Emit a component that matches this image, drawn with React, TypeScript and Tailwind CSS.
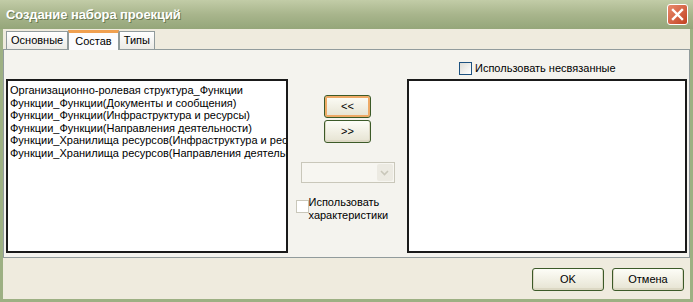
import React from 'react'

const items = [
  'Организационно-ролевая структура_Функции',
  'Функции_Функции(Документы и сообщения)',
  'Функции_Функции(Инфраструктура и ресурсы)',
  'Функции_Функции(Направления деятельности)',
  'Функции_Хранилища ресурсов(Инфраструктура и ресурсы)',
  'Функции_Хранилища ресурсов(Направления деятельности)',
]

function XpButton({ label, focused, className }: { label: string; focused?: boolean; className?: string }) {
  return (
    <button
      className={`flex items-center justify-center rounded-[3px] border border-[#3c5a28] bg-gradient-to-b from-[#fdfdf7] to-[#e6e3d2] text-[11px] text-black ${
        focused ? 'shadow-[inset_0_0_0_2px_#eeaa66]' : 'shadow-[inset_0_-1px_0_1px_#dcd8c4]'
      } ${className ?? ''}`}
    >
      {label}
    </button>
  )
}

function CheckBox() {
  return <span className="inline-block h-[13px] w-[13px] border border-[#1c5180] bg-gradient-to-br from-[#dcdcd7] to-white" />
}

export default function App() {
  return (
    <div
      className="relative h-[302px] w-[693px] overflow-hidden bg-[#efebde] text-black"
      style={{ fontFamily: '"Liberation Sans", Arial, sans-serif' }}
    >
      {/* title bar */}
      <div className="flex h-[29px] items-center justify-between bg-gradient-to-b from-[#c2cca7] via-[#a8b58c] to-[#95a67a] pl-[6px] pr-[5px]">
        <span className="text-[13px] font-bold tracking-[-0.1px] text-white [text-shadow:1px_1px_0_#6a7a50]">
          Создание набора проекций
        </span>
        <span className="flex h-[21px] w-[21px] items-center justify-center rounded-[3px] border border-white bg-gradient-to-br from-[#e88a6c] to-[#c2401f]">
          <svg width="13" height="13" viewBox="0 0 13 13">
            <path d="M2 2 L11 11 M11 2 L2 11" stroke="white" strokeWidth="2.4" strokeLinecap="square" />
          </svg>
        </span>
      </div>

      {/* body */}
      <div className="flex h-[273px] flex-col border-x-[3px] border-b-[3px] border-x-[#9db083] border-b-[#9db083]">
        {/* tabs */}
        <div className="flex h-[20px] items-end pl-[3px] pt-[1px]">
          <div className="flex h-[18px] items-center border border-b-0 border-[#919b9c] bg-gradient-to-b from-white to-[#ecebe6] px-[4px] text-[11px]">
            Основные
          </div>
          <div className="relative -mb-[1px] flex h-[20px] items-center border-x border-[#919b9c] border-t-[3px] border-t-[#f0a050] bg-[#fcfcfe] px-[6px] text-[11px]">
            Состав
          </div>
          <div className="flex h-[18px] items-center border border-b-0 border-[#919b9c] bg-gradient-to-b from-white to-[#ecebe6] px-[4px] text-[11px]">
            Типы
          </div>
        </div>

        {/* tab panel */}
        <div className="flex h-[209px] flex-col border border-[#919b9c] bg-[#f4f3ee] px-[2px] pt-[10px]">
          <div className="flex h-[16px] items-center pl-[453px] text-[11px]">
            <CheckBox />
            <span className="ml-[3px]">Использовать несвязанные</span>
          </div>
          <div className="mt-[3px] flex">
            <div className="h-[174px] w-[282px] overflow-hidden border-2 border-[#1a1a1a] bg-white pl-[2px] pt-[3px] text-[11px] leading-[12.5px]">
              {items.map((t) => (
                <div key={t} className="whitespace-nowrap">
                  {t}
                </div>
              ))}
            </div>
            <div className="flex w-[120px] flex-col items-center">
              <XpButton label="<<" focused className="mt-[16px] h-[23px] w-[47px]" />
              <XpButton label=">>" className="mt-[2px] h-[23px] w-[47px]" />
              <div className="mt-[19px] flex h-[21px] w-[94px] items-center justify-end border border-[#c9c7ba] bg-[#f7f6f1] pr-[1px]">
                <span className="flex h-[17px] w-[16px] items-center justify-center rounded-[2px] bg-[#eceae2]">
                  <svg width="9" height="6" viewBox="0 0 9 6">
                    <path d="M1 1 L4.5 4.5 L8 1" stroke="#c9c7ba" strokeWidth="1.6" fill="none" />
                  </svg>
                </span>
              </div>
              <div className="mt-[13px] flex w-[104px] text-[11px] leading-[13px]">
                <span className="mt-[4px] inline-block h-[13px] w-[13px] shrink-0 border border-[#c9c7ba] bg-white" />
                <span>
                  Использовать
                  <br />
                  характеристики
                </span>
              </div>
            </div>
            <div className="h-[174px] w-[280px] border-2 border-[#1a1a1a] bg-white" />
          </div>
        </div>

        {/* footer */}
        <div className="flex flex-1 items-center justify-end gap-[8px] pr-[6px] pt-[1px]">
          <XpButton label="OK" className="h-[23px] w-[72px]" />
          <XpButton label="Отмена" className="h-[23px] w-[72px]" />
        </div>
      </div>
    </div>
  )
}
